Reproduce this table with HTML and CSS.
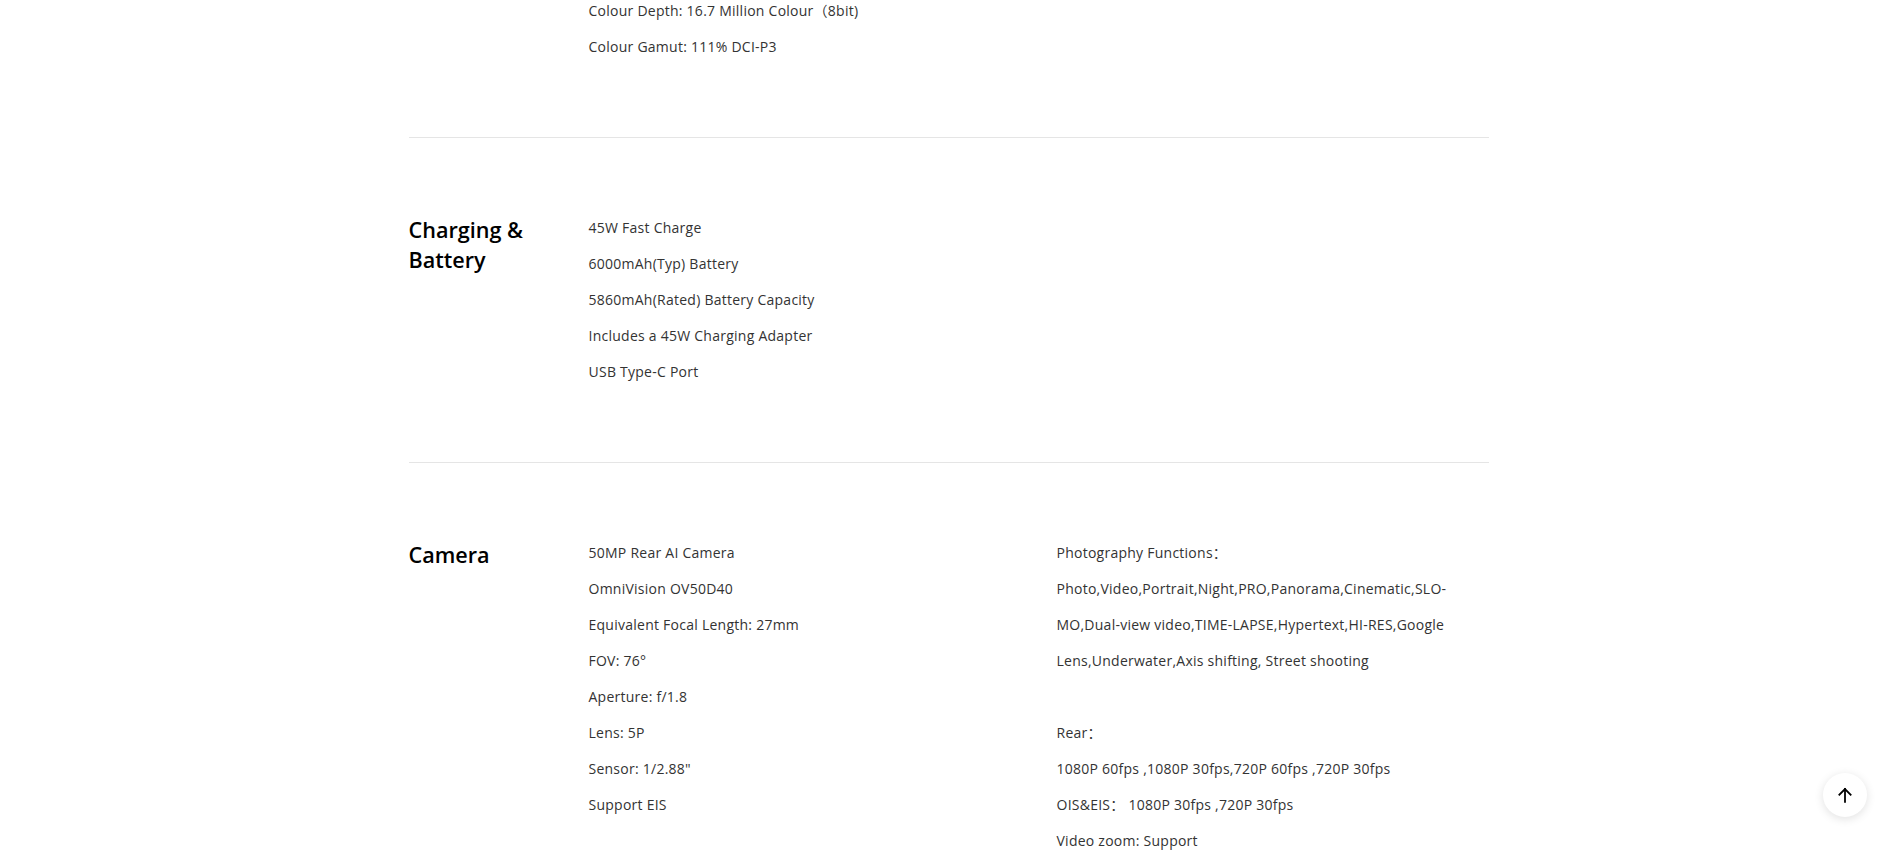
FILE: index.html
```html
<!DOCTYPE html>
<html lang="en">
<head>
<meta charset="utf-8">
<title>Specs</title>
<link rel="stylesheet" href="styles.css">
</head>
<body>
<main class="specs">
  <section class="spec spec--first">
    <h2 class="spec-title"></h2>
    <div class="spec-col">
      <p>Colour Depth: 16.7 Million Colour（8bit)</p>
      <p>Colour Gamut: 111% DCI-P3</p>
    </div>
    <div class="spec-col"></div>
  </section>
  <section class="spec">
    <h2 class="spec-title">Charging &amp; Battery</h2>
    <div class="spec-col">
      <p>45W Fast Charge</p>
      <p>6000mAh(Typ) Battery</p>
      <p>5860mAh(Rated) Battery Capacity</p>
      <p>Includes a 45W Charging Adapter</p>
      <p>USB Type-C Port</p>
    </div>
    <div class="spec-col"></div>
  </section>
  <section class="spec">
    <h2 class="spec-title">Camera</h2>
    <div class="spec-col">
      <p>50MP Rear AI Camera</p>
      <p>OmniVision OV50D40</p>
      <p>Equivalent Focal Length: 27mm</p>
      <p>FOV: 76°</p>
      <p>Aperture: f/1.8</p>
      <p>Lens: 5P</p>
      <p>Sensor: 1/2.88"</p>
      <p>Support EIS</p>
    </div>
    <div class="spec-col">
      <p>Photography Functions：</p>
      <p>Photo,Video,Portrait,Night,PRO,Panorama,Cinematic,SLO-MO,Dual-view video,TIME-LAPSE,Hypertext,HI-RES,Google Lens,Underwater,Axis shifting, Street shooting</p>
      <p class="blank">&nbsp;</p>
      <p>Rear：</p>
      <p>1080P 60fps ,1080P 30fps,720P 60fps ,720P 30fps</p>
      <p>OIS&amp;EIS：&nbsp;1080P 30fps ,720P 30fps</p>
      <p>Video zoom: Support</p>
    </div>
  </section>
</main>
<button class="to-top" aria-label="Back to top">
  <svg width="18" height="18" viewBox="0 0 24 24" fill="none" stroke="#000" stroke-width="2.4" stroke-linecap="square"><path d="M12 21V4"/><path d="M4.5 11.5L12 4l7.5 7.5"/></svg>
</button>
</body>
</html>
```
FILE: styles.css
```css
* { box-sizing: border-box; }
html, body { margin: 0; padding: 0; background: #fff; }
body {
  font-family: "Open Sans", "Noto Sans CJK SC", sans-serif;
  color: #333;
  overflow: hidden;
}
.specs {
  width: 1080px;
  margin: 0 auto;
}
.spec {
  display: grid;
  grid-template-columns: 180px 468px 1fr;
  padding: 72px 0;
  border-bottom: 1px solid #e5e5e5;
}
.spec--first {
  padding-top: 0;
  padding-bottom: 72px;
  margin-top: -7px;
}
.spec-title {
  margin: 5px 0 0;
  font-size: 21.6px;
  line-height: 30px;
  font-weight: 600;
  color: #000;
  padding-right: 20px;
}
.spec-col p {
  margin: 0;
  font-size: 14px;
  line-height: 36px;
  letter-spacing: 0.25px;
}
.to-top {
  position: fixed;
  right: 30px;
  bottom: 43px;
  width: 44px;
  height: 44px;
  border-radius: 50%;
  border: none;
  background: #fff;
  box-shadow: 0 2px 10px rgba(0,0,0,0.12);
  display: flex;
  align-items: center;
  justify-content: center;
  padding: 0;
  cursor: pointer;
}
```
